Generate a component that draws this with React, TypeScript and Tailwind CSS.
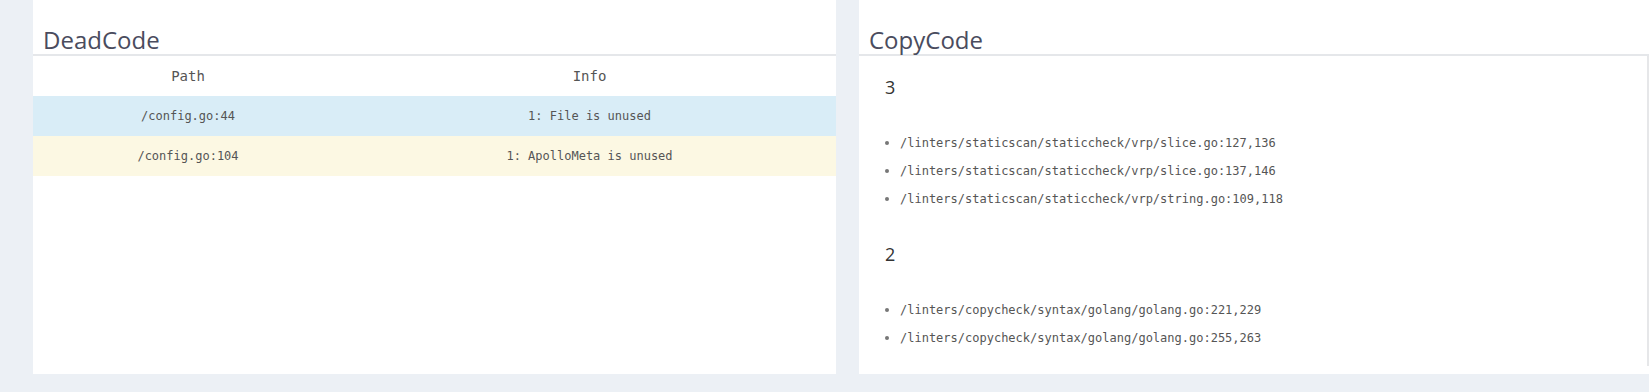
import React from "react";

const mono = { fontFamily: '"DejaVu Sans Mono", "Liberation Mono", monospace' } as const;
const sans = { fontFamily: '"Open Sans", "Noto Sans", sans-serif' } as const;

function Title({ children }: { children: React.ReactNode }) {
  return (
    <div
      className="pt-[25px] px-[10px] text-[24px] leading-[29px] text-[#4a4c5e] border-b-2 border-[#e5e7ea]"
      style={sans}
    >
      {children}
    </div>
  );
}

const rows = [
  { path: "/config.go:44", info: "1: File is unused", bg: "bg-[#d9edf7]" },
  { path: "/config.go:104", info: "1: ApolloMeta is unused", bg: "bg-[#fcf8e3]" },
];

const groups = [
  {
    n: "3",
    items: [
      "/linters/staticscan/staticcheck/vrp/slice.go:127,136",
      "/linters/staticscan/staticcheck/vrp/slice.go:137,146",
      "/linters/staticscan/staticcheck/vrp/string.go:109,118",
    ],
  },
  {
    n: "2",
    items: [
      "/linters/copycheck/syntax/golang/golang.go:221,229",
      "/linters/copycheck/syntax/golang/golang.go:255,263",
    ],
  },
];

export default function App() {
  return (
    <div className="w-[1649px] h-[392px] overflow-hidden bg-[#ecf0f5] flex gap-[23px] pl-[33px] pb-[18px]">
      <div className="w-[803px] shrink-0 bg-white flex flex-col">
        <Title>DeadCode</Title>
        <div className="grid grid-cols-[310px_1fr] text-[#555]" style={mono}>
          <div className="h-[40px] flex items-center justify-center text-[14px]">Path</div>
          <div className="h-[40px] flex items-center justify-center text-[14px]">Info</div>
          {rows.map((r) => (
            <React.Fragment key={r.path}>
              <div className={`h-[40px] flex items-center justify-center text-[12px] ${r.bg}`}>{r.path}</div>
              <div className={`h-[40px] flex items-center justify-center text-[12px] ${r.bg}`}>{r.info}</div>
            </React.Fragment>
          ))}
        </div>
      </div>
      <div className="w-[791px] shrink-0 bg-white flex flex-col pb-[8px]">
        <Title>CopyCode</Title>
        <div className="flex-1 mr-[1px] border-r-2 border-[#e6e7e9] pt-[18px] pl-[26px]">
          {groups.map((g, gi) => (
            <div key={g.n} className={gi > 0 ? "mt-[28px]" : ""}>
              <div className="h-[26px] leading-[26px] text-[18px] text-[#333]" style={sans}>
                {g.n}
              </div>
              <ul className="mt-[29px]">
                {g.items.map((it) => (
                  <li key={it} className="h-[28px] flex items-center text-[12px] text-[#555]" style={mono}>
                    <span className="w-[4px] h-[4px] rounded-full bg-[#777] mr-[11px]" />
                    {it}
                  </li>
                ))}
              </ul>
            </div>
          ))}
        </div>
      </div>
    </div>
  );
}
